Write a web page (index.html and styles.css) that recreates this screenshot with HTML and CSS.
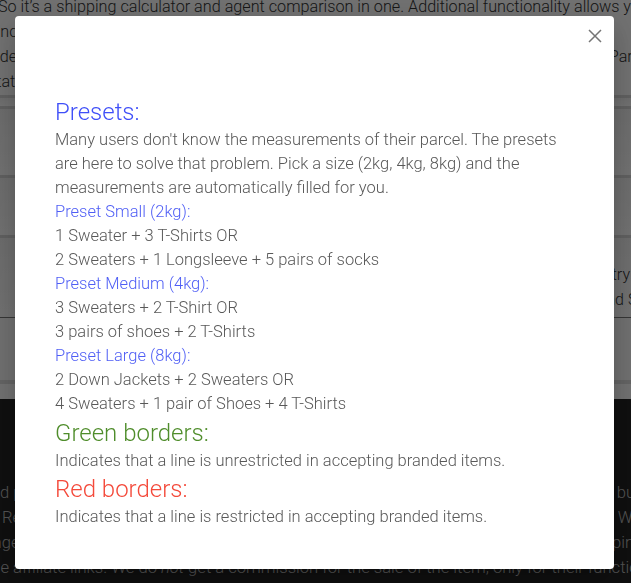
FILE: index.html
```html
<!DOCTYPE html>
<html lang="en">
<head>
    <meta charset="UTF-8">
    <meta name="viewport" content="width=device-width, initial-scale=1.0">
    <title>Shipping Calculator</title>
    <link rel="stylesheet" href="styles.css">
</head>
<body>

<div class="page">
    <div class="intro">
        <p class="line l1">So it’s a shipping calculator and agent comparison in one. Additional functionality allows you to</p>
        <p class="line l2"><span>functionality to check each line at once.</span><span></span></p>
        <p class="line l3"><span>under a given budget.</span><span>Parcel</span></p>
        <p class="line l4"><span>station.</span><span></span></p>
    </div>

    <div class="rows">
        <div class="row row-a"></div>
        <div class="row row-b"></div>
        <div class="row row-c"></div>
        <div class="row row-d">
            <p class="row-text rt1">Select your destination country</p>
            <p class="row-text rt2">Compare and find the fastest one and Service</p>
        </div>
        <div class="row row-e"></div>
    </div>

    <footer class="footer">
        <p class="fline f1"><span>and pages are community based.</span><span>buy</span></p>
        <p class="fline f2"><span>Reviews and feedback are welcome.</span><span>We</span></p>
        <p class="fline f3"><span>change things quickly.</span><span>pinned</span></p>
        <p class="fline f4"><span>the affiliate links. We do <em>not</em> get a commission for the sale of the item, only for their functions.</span></p>
    </footer>
</div>

<div class="overlay">
    <div class="modal">
        <div class="modal-head">
            <button type="button" class="close" aria-label="Close">
                <svg width="14" height="14" viewBox="0 0 14 14">
                    <path d="M1 1 L13 13 M13 1 L1 13" stroke="#757575" stroke-width="1.5" fill="none"/>
                </svg>
            </button>
        </div>
        <div class="modal-body">
            <h4 class="title blue">Presets:</h4>
            <p>Many users don't know the measurements of their parcel. The presets are here to solve that problem. Pick a size (2kg, 4kg, 8kg) and the measurements are automatically filled for you.</p>
            <p class="preset">Preset Small (2kg):</p>
            <p>1 Sweater + 3 T-Shirts OR</p>
            <p>2 Sweaters + 1 Longsleeve + 5 pairs of socks</p>
            <p class="preset">Preset Medium (4kg):</p>
            <p>3 Sweaters + 2 T-Shirt OR</p>
            <p>3 pairs of shoes + 2 T-Shirts</p>
            <p class="preset">Preset Large (8kg):</p>
            <p>2 Down Jackets + 2 Sweaters OR</p>
            <p>4 Sweaters + 1 pair of Shoes + 4 T-Shirts</p>
            <h4 class="title green">Green borders:</h4>
            <p>Indicates that a line is unrestricted in accepting branded items.</p>
            <h4 class="title red">Red borders:</h4>
            <p>Indicates that a line is restricted in accepting branded items.</p>
        </div>
    </div>
</div>

</body>
</html>
```

FILE: styles.css
```css
body {
    margin: 0;
    font-family: Roboto, "Liberation Sans", sans-serif;
    font-weight: 300;
    background-color: #fff;
    overflow: hidden;
}

.page {
    width: 631px;
    height: 583px;
    overflow: hidden;
}

/* page behind the modal */
.intro {
    margin-top: -6px;
    height: 100px;
}

.line {
    margin: 0;
    font-size: 16.2px;
    line-height: 25px;
    color: #333;
    white-space: nowrap;
    display: flex;
    justify-content: space-between;
}

.l1 {
    margin-left: -2px;
}

.l2 {
    margin-left: -14px;
}

.l3 {
    margin-left: -18px;
}

.l3 span:last-child {
    margin-right: -22px;
}

.l4 {
    margin-left: -12px;
}

.row {
    background: linear-gradient(#f4f4f4, #fff);
    border-top: 3px solid #d8d8d8;
}

.row-a {
    margin-top: 1px;
    height: 8px;
}

.row-b {
    height: 66px;
}

.row-c {
    height: 57px;
}

.row-d {
    height: 55px;
    padding-top: 24px;
    border-bottom: 1px solid #7a7a7a;
}

.row-text {
    margin: 0;
    font-size: 16px;
    line-height: 25px;
    color: #333;
    white-space: nowrap;
    text-align: right;
}

.rt1 {
    margin-right: 1px;
}

.rt2 {
    margin-right: -48px;
}

.row-e {
    height: 62px;
    border-top: none;
    border-bottom: 4px solid #e0e0e0;
    margin-bottom: 15px;
    background: #fdfdfd;
}

.footer {
    background-color: #232323;
    color: #bbb;
    height: 200px;
    padding-top: 81px;
}

.fline {
    margin: 0;
    font-size: 16.6px;
    line-height: 25px;
    white-space: nowrap;
    display: flex;
    justify-content: space-between;
}

.f1 {
    margin-left: -18px;
    margin-right: -12px;
}

.f2 {
    margin-left: 2px;
    margin-right: -10px;
}

.f3 {
    margin-left: -34px;
    margin-right: -30px;
}

.f4 {
    margin-left: -14px;
}

/* modal */
.overlay {
    position: fixed;
    inset: 0;
    background-color: rgba(0, 0, 0, 0.56);
    padding: 16px 17px 14px 15px;
}

.modal {
    background-color: #fff;
    border-radius: 4px;
    height: 553px;
    box-sizing: border-box;
    padding: 4px 12px 41px 20px;
    box-shadow: 0 16px 24px rgba(0, 0, 0, 0.14), 0 6px 30px rgba(0, 0, 0, 0.12);
}

.modal-head {
    display: flex;
    justify-content: flex-end;
}

.close {
    width: 24px;
    height: 32px;
    padding: 0;
    margin-right: -5px;
    border: none;
    background: none;
    display: flex;
    align-items: center;
    justify-content: center;
    cursor: pointer;
}

.modal-body {
    margin-top: 44px;
    padding: 0 28px 0 20px;
    color: #585858;
    font-size: 16.5px;
    line-height: 24px;
}

.modal-body p {
    margin: 0;
}

.title {
    margin: 0;
    font-size: 24px;
    line-height: 32px;
    font-weight: 300;
}

.green {
    margin-top: 1px;
}

.blue {
    color: #3f4ff8;
}

.preset {
    color: #4f5ef5;
}

.green {
    color: #4f8d2b;
}

.red {
    color: #f4493a;
}
```
